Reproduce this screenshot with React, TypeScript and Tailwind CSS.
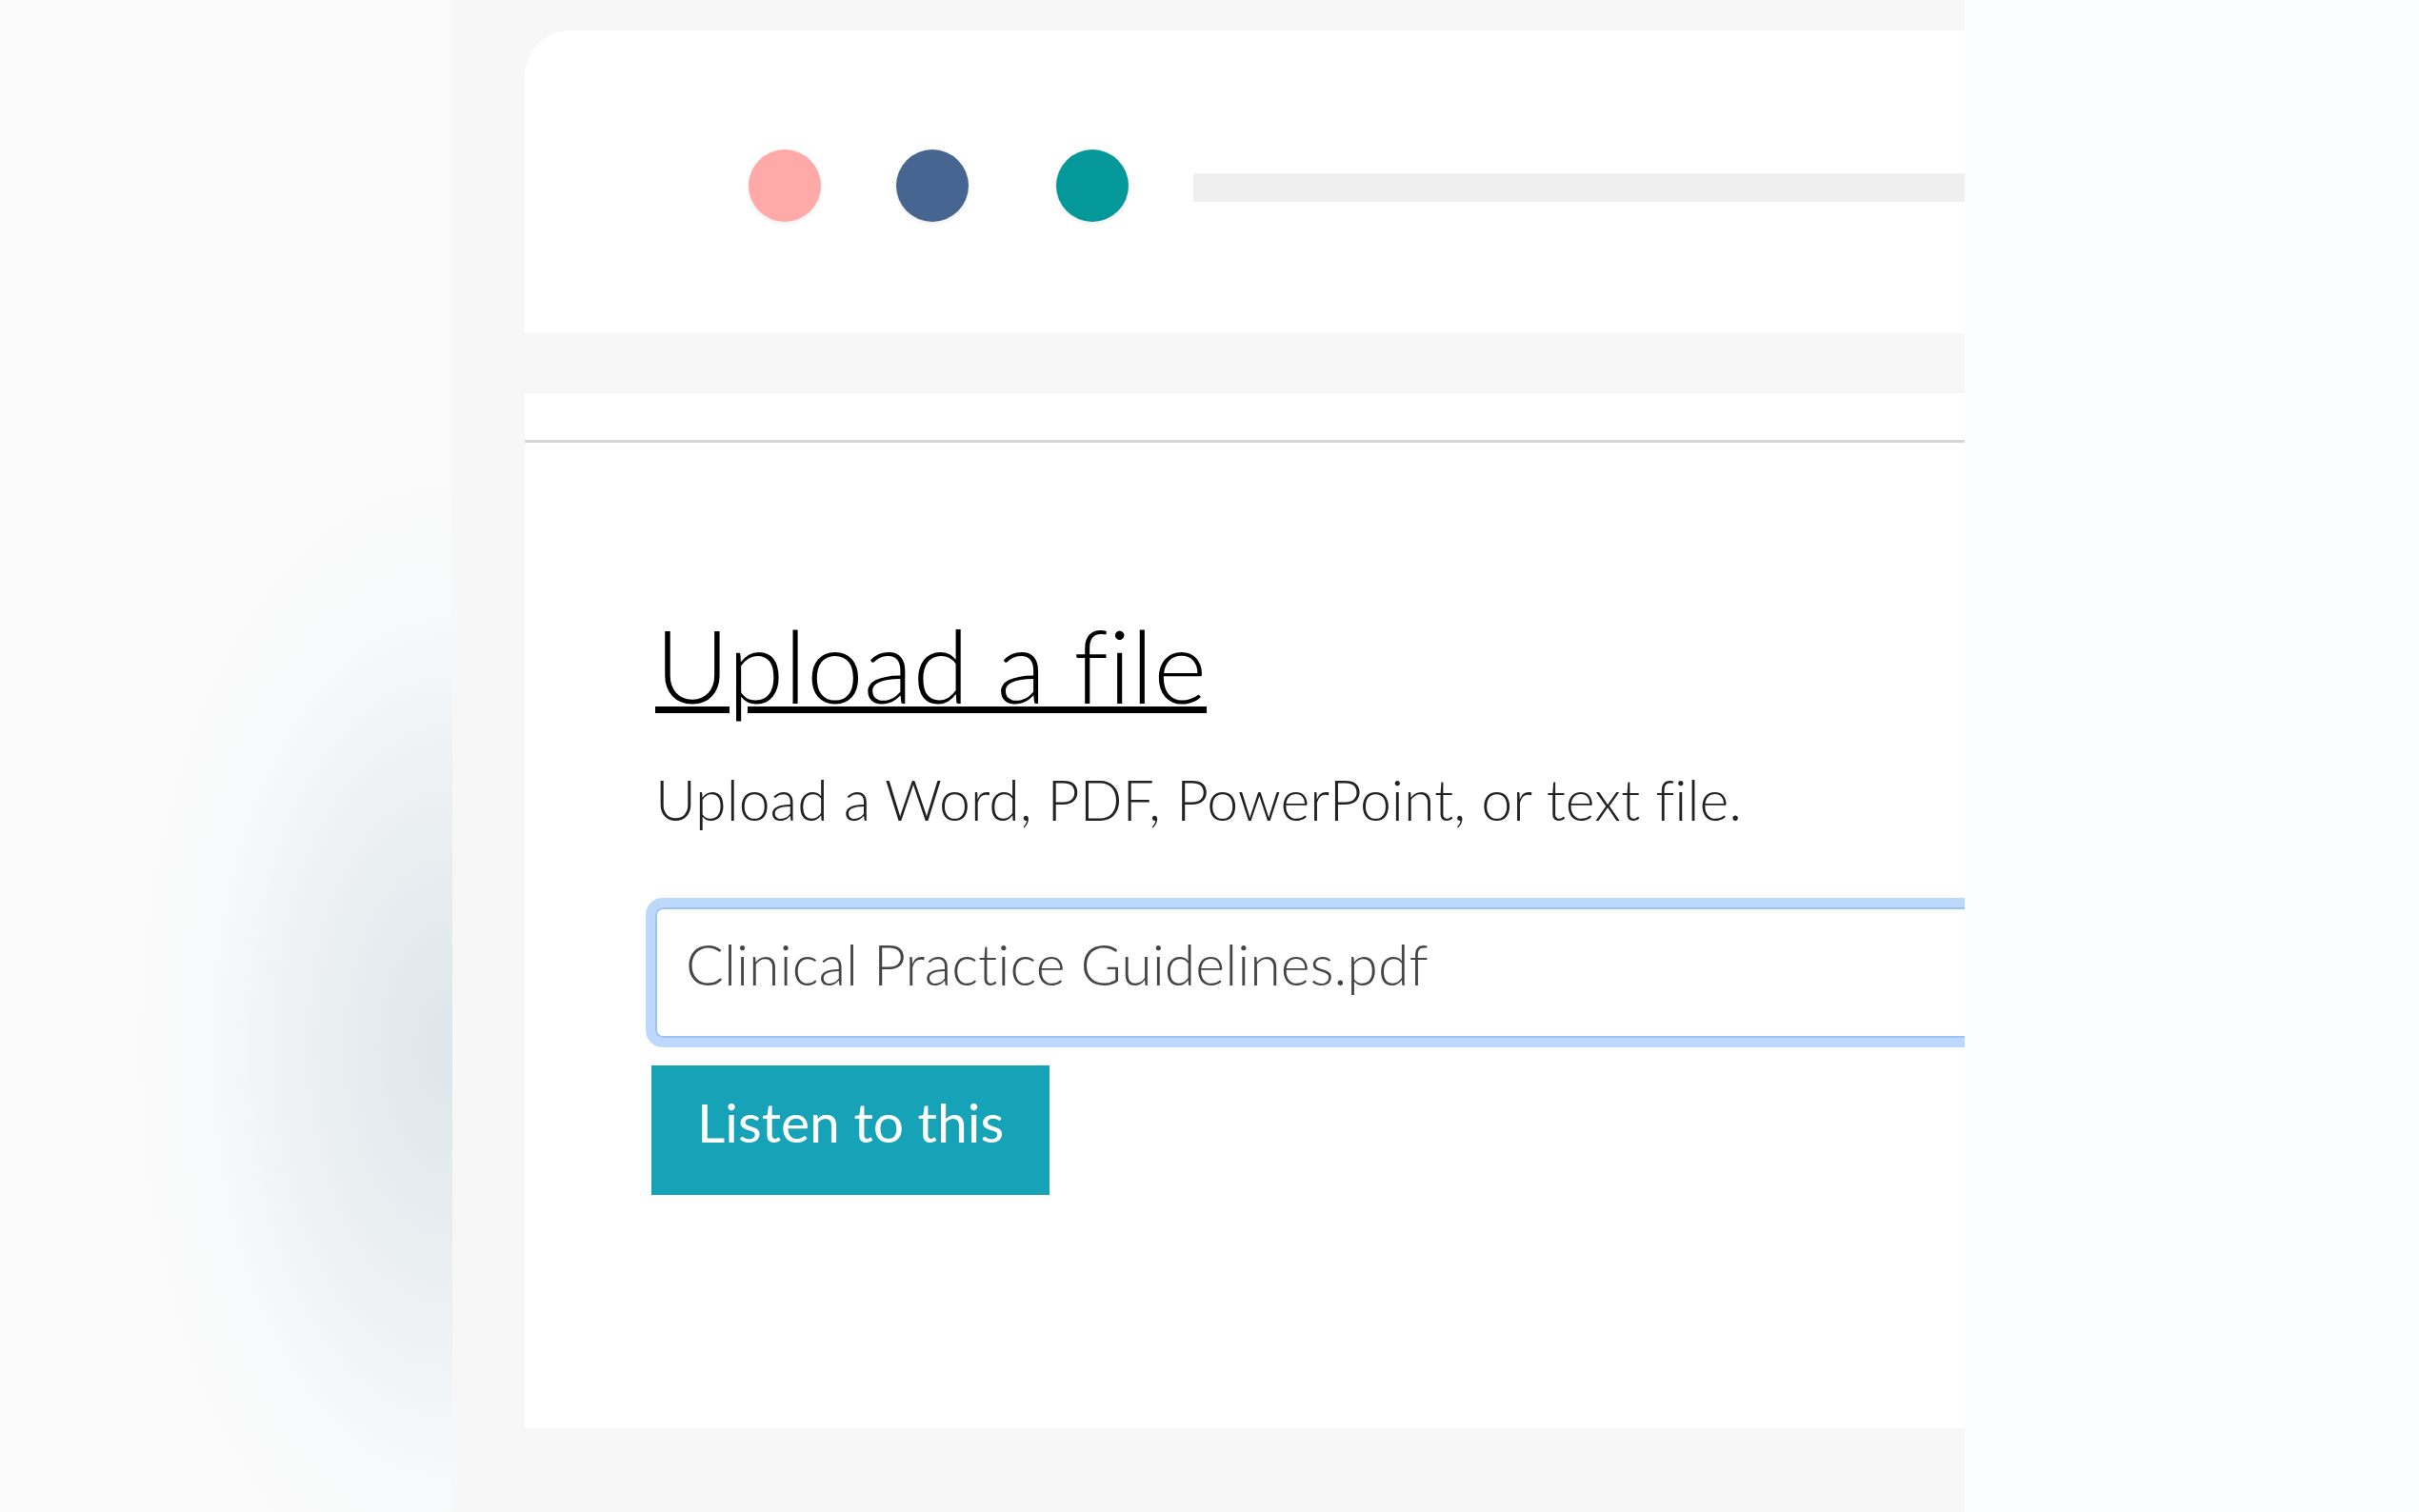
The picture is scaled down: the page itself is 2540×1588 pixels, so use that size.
import React from "react";

const Dot = ({ color, className }: { color: string; className?: string }) => (
  <span
    className={`block h-[76px] w-[76px] shrink-0 rounded-full shadow-[0_2px_4px_rgba(0,0,0,0.08)] ${color} ${className ?? ""}`}
  />
);

const App = () => {
  return (
    <div className="flex h-[1588px] w-[2540px] overflow-hidden bg-[#f7f7f7] font-['Lato',sans-serif] [font-variant-ligatures:none]">
      {/* left blurred panel */}
      <div className="h-full w-[475px] shrink-0 bg-[radial-gradient(ellipse_340px_620px_at_470px_1100px,#dde6eb_0%,#e9eef1_35%,#f8f9fa_75%,#fbfbfb_100%),radial-gradient(ellipse_200px_500px_at_470px_150px,#fdf3f3_0%,#fbfbfb_100%)] bg-[#fbfbfb]" />

      {/* middle: app window */}
      <div className="flex h-full flex-1 flex-col pb-[88px] pl-[76px] pt-[32px]">
        <div className="flex h-full flex-col rounded-tl-[48px] bg-white">
          <header className="flex h-[318px] items-center pl-[235px] pt-[8px]">
            <Dot color="bg-[#ffaaa9]" />
            <Dot color="bg-[#466591]" className="ml-[79px]" />
            <Dot color="bg-[#05989b]" className="ml-[92px]" />
            <div className="ml-[68px] mt-[4px] h-[30px] flex-1 bg-[#efeff0]" />
          </header>
          <div className="h-[63px] bg-[#f7f7f7]" />
          <div className="h-[49px]" />
          <div className="h-[3px] bg-[#d6d6d6]" />

          <main className="flex flex-col items-start pl-[137px] pt-[178px]">
            <h1 className="text-[107px] font-light leading-[110px] text-black underline decoration-[7px] underline-offset-[3px]">
              Upload a file
            </h1>
            <p className="mt-[51px] text-[59px] font-light leading-[72px] text-[#222]">
              Upload a Word, PDF, PowerPoint, or text file.
            </p>
            <div className="mt-[77px] flex h-[137px] w-full items-center rounded-l-[8px] border-2 border-r-0 border-[#9cc3f7] pb-[18px] pl-[30px] shadow-[0_0_0_10px_#bcd9fc]">
              <span className="text-[59px] font-light leading-[72px] text-[#444]">
                Clinical Practice Guidelines.pdf
              </span>
            </div>
            <button className="-ml-[4px] mt-[29px] flex h-[136px] items-center bg-[#16a2b7] px-12 pb-[18px] text-[57px] leading-[72px] text-white">
              Listen to this
            </button>
          </main>
        </div>
      </div>

      {/* right pale panel */}
      <div className="h-full w-[477px] shrink-0 bg-[#fbfcfd]" />
    </div>
  );
};

export default App;
